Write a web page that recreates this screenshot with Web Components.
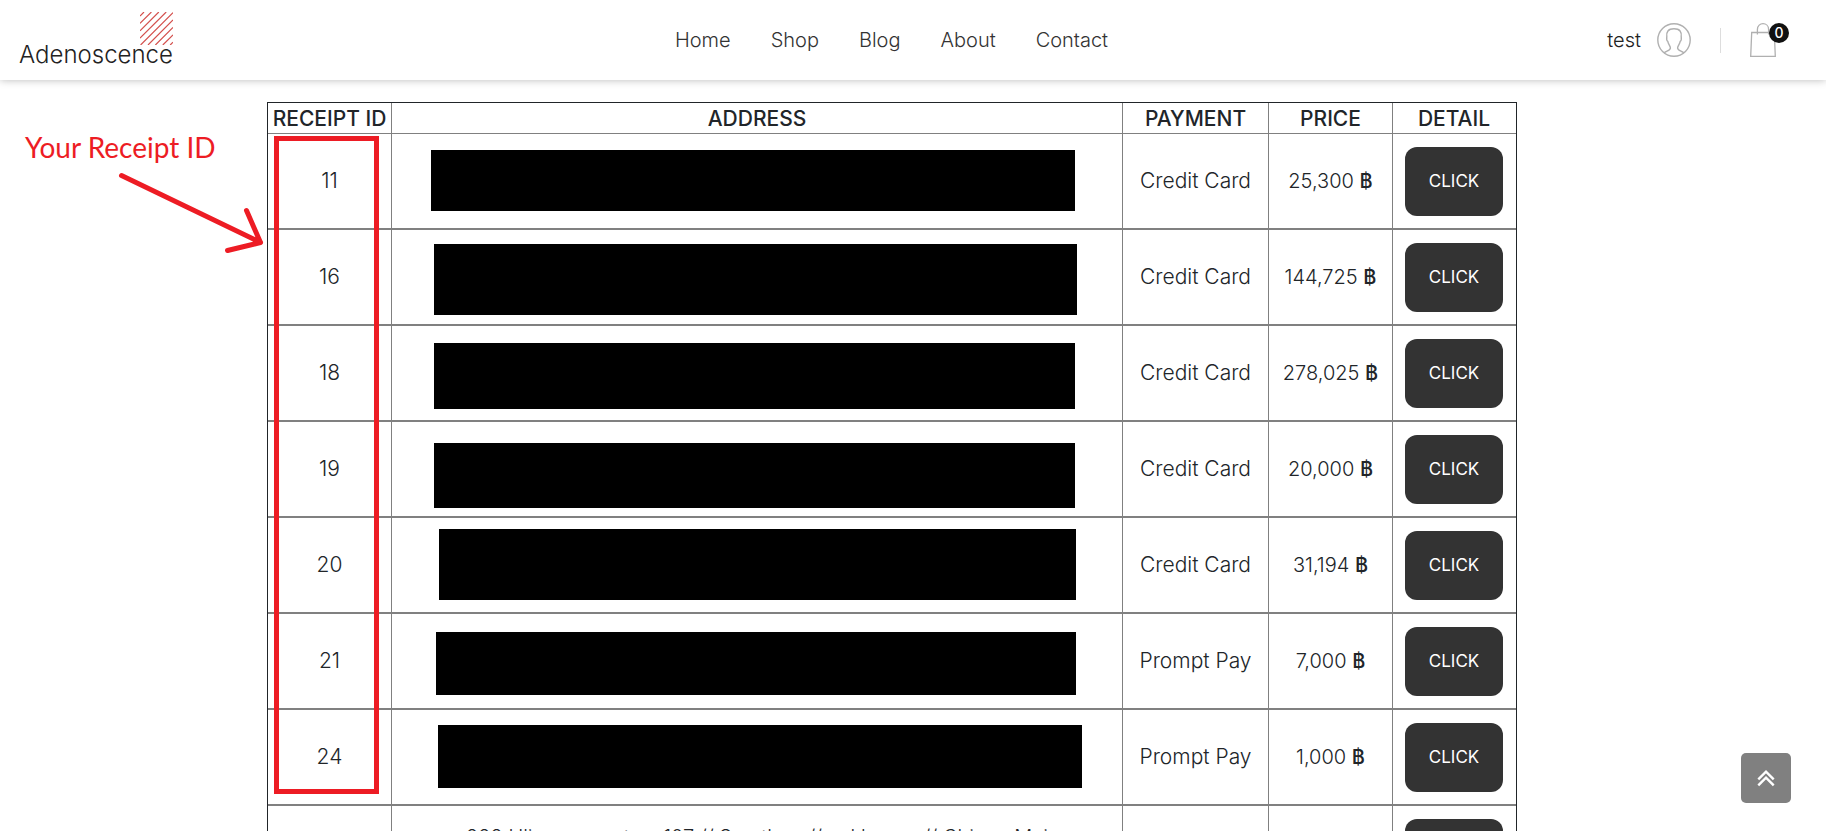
<!DOCTYPE html>
<html lang="en">
<head>
<meta charset="utf-8">
<title>Adenoscence</title>
<style>
  html { scrollbar-width: none; }
  body { margin: 0; background: #fff; color: #212529; font-family: Inter, "Noto Sans", sans-serif; font-weight: 300; }
  main { position: relative; padding: 22px 309px 40px 267px; }
</style>
</head>
<body>
<site-header>
  <site-logo slot="logo">Adenoscence</site-logo>
  <nav-link href="#home">Home</nav-link>
  <nav-link href="#shop">Shop</nav-link>
  <nav-link href="#blog">Blog</nav-link>
  <nav-link href="#about">About</nav-link>
  <nav-link href="#contact">Contact</nav-link>
  <user-link slot="tools">test</user-link>
  <cart-link slot="tools">0</cart-link>
</site-header>
<main>
  <receipt-table></receipt-table>
  <guide-layer>Your Receipt ID</guide-layer>
</main>
<scroll-top></scroll-top>

<script>
const define = (name, html, setup) => customElements.define(name, class extends HTMLElement {
  connectedCallback() {
    if (this.shadowRoot) return;
    const root = this.attachShadow({ mode: "open" });
    root.innerHTML = html;
    if (setup) setup(this, root);
  }
});

define("site-header", `
<style>
  :host { display: block; position: sticky; top: 0; z-index: 5; }
  header { display: grid; grid-template-columns: 1fr auto 1fr; align-items: center; box-sizing: border-box;
    height: 80px; padding: 0 37px 0 19px; background: #fff; box-shadow: 0 0 8px rgba(0,0,0,.28); }
  nav { display: flex; gap: 40px; margin-right: 25px; }
  .tools { display: flex; align-items: center; justify-content: flex-end; }
</style>
<header>
  <slot name="logo"></slot>
  <nav><slot></slot></nav>
  <div class="tools"><slot name="tools"></slot></div>
</header>`);

define("site-logo", `
<style>
  :host { display: block; padding-bottom: 4px; }
  a { display: inline-flex; flex-direction: column; align-items: flex-end; color: #222; text-decoration: none;
    font-size: 24px; line-height: 19px; }
  svg { display: block; }
</style>
<a href="#home">
  <svg width="33" height="33" viewBox="0 0 33 33" fill="none" stroke="#d4514e" stroke-width="1.2" aria-hidden="true">
    <path d="M4 0L0 4M11.4 0L0 11.4M18.8 0L0 18.8M26.2 0L0 26.2M33 .6L.6 33M33 8L8 33M33 15.4L15.4 33M33 22.8L22.8 33M33 30.2L30.2 33"/>
  </svg>
  <slot></slot>
</a>`);

define("nav-link", `
<style>
  :host { display: block; }
  a { color: #333; text-decoration: none; font-size: 20px; line-height: 24px; }
</style>
<a><slot></slot></a>`, (el, root) => { root.querySelector("a").href = el.getAttribute("href"); });

define("user-link", `
<style>
  :host { display: block; padding-right: 29px; }
  a { display: flex; align-items: center; gap: 16px; color: #222; text-decoration: none; font-size: 20px; line-height: 24px; }
</style>
<a href="#account"><slot></slot>
  <svg width="34" height="34" viewBox="0 0 34 34" fill="none" stroke="#b0b0b0" stroke-width="1.4" aria-hidden="true">
    <circle cx="17" cy="17" r="16.2"/>
    <path d="M7 30C9 28 13.4 27.6 13.4 25C13.4 23 11.2 21.4 10.8 18.4C9.2 17.4 9.6 15.4 9.8 13.6C9.2 9 11 5.8 17 5.8S24.8 9 24.2 13.6C24.4 15.4 24.8 17.4 23.2 18.4C22.8 21.4 20.6 23 20.6 25C20.6 27.6 25 28 27 30"/>
  </svg>
</a>`);

define("cart-link", `
<style>
  :host { display: flex; align-items: center; }
  .rule { width: 1px; height: 25px; background: #ddd; }
  a { position: relative; display: block; margin-left: 29px; padding-right: 13px; color: #fff; text-decoration: none; }
  svg { display: block; }
  .count { position: absolute; top: 0; right: 0; width: 20px; height: 20px; border-radius: 50%; background: #111;
    font-size: 14px; font-weight: 500; line-height: 20px; text-align: center; }
</style>
<span class="rule"></span>
<a href="#cart" aria-label="Cart">
  <svg width="26" height="34" viewBox="0 0 26 34" fill="none" stroke="#b0b0b0" stroke-width="1.3" aria-hidden="true">
    <path d="M1.7 9.5H24.3L25.3 33.3H.7ZM7.4 11.6V6.4C7.4 -1.2 18.6 -1.2 18.6 6.4V11.6"/>
  </svg>
  <span class="count"><slot></slot></span>
</a>`);

define("detail-button", `
<style>
  :host { display: inline-block; vertical-align: top; }
  button { display: block; width: 98px; height: 69px; padding: 0; border: 0; border-radius: 12px; background: #333; color: #fff;
    font: inherit; font-size: 17px; font-weight: 400; cursor: pointer; }
</style>
<button type="button"><slot></slot></button>`);

const receipts = [
  ["11", "", "Credit Card", "25,300"],
  ["16", "", "Credit Card", "144,725"],
  ["18", "", "Credit Card", "278,025"],
  ["19", "", "Credit Card", "20,000"],
  ["20", "", "Credit Card", "31,194"],
  ["21", "", "Prompt Pay", "7,000"],
  ["24", "", "Prompt Pay", "1,000"],
  ["", "222 Ulica nearest so 107 // Sarathon // nakhonsa // Chiang Mai", "", ""]
];

define("receipt-table", `
<style>
  :host { display: block; }
  table { width: 100%; table-layout: fixed; border: 1px solid #212529; border-collapse: separate; border-spacing: 0; text-align: center; }
  .id, .price { width: 123px; }
  .payment { width: 145px; }
  .detail { width: 122px; }
  th, td { padding: 0; border-right: 1px solid #808080; }
  th:last-child, td:last-child { padding-right: 1px; border-right: 0; }
  th { height: 28px; padding-top: 2px; border-bottom: 1px solid #808080; font-size: 21px; font-weight: 500; line-height: 28px; white-space: nowrap; }
  td { height: 94px; border-bottom: 2px solid #808080; font-size: 21px; line-height: 30px; }
  td.money { font-size: 20px; }
  td.address { padding: 17px 60px 0; height: 77px; vertical-align: top; font-size: 20px; line-height: 28px; white-space: nowrap; }
  b { font-weight: 500; }
</style>
<table>
  <thead><tr><th class="id" scope="col">RECEIPT ID</th><th scope="col">ADDRESS</th><th class="payment" scope="col">PAYMENT</th><th class="price" scope="col">PRICE</th><th class="detail" scope="col">DETAIL</th></tr></thead>
  <tbody></tbody>
</table>`, (el, root) => {
  root.querySelector("tbody").innerHTML = receipts.map(([id, address, payment, price]) =>
    `<tr><td>${id}</td><td class="address">${address}</td><td>${payment}</td><td class="money">${price ? price + " <b>฿</b>" : ""}</td><td><detail-button>CLICK</detail-button></td></tr>`).join("");
});

/* Hand-drawn notes laid over the table: redactions, a frame and an arrow. */
define("guide-layer", `
<style>
  :host { position: absolute; top: 0; left: 0; pointer-events: none; color: #ed1c24; }
  svg { display: block; }
  p { position: absolute; left: 25px; top: 51px; margin: 0; font: 400 28px/32px Lato, "Open Sans", sans-serif; white-space: nowrap; }
</style>
<svg width="1100" height="720" viewBox="0 80 1100 720" aria-hidden="true">
  <path d="M431 150H1075V211H431ZM434 244H1077V315H434ZM434 343H1075V409H434ZM434 443H1075V508H434ZM439 529H1076V600H439ZM436 632H1076V695H436ZM438 725H1082V788H438Z"/>
  <g fill="none" stroke="#ed1c24" stroke-width="5">
    <rect x="276.500" y="138.500" width="100" height="653"/>
    <path stroke-linecap="round" stroke-linejoin="round" d="M121.500 175.500L260.500 242.500M246.500 210.500L260.500 242.500L227.500 250.500"/>
  </g>
</svg>
<p><slot></slot></p>`);

define("scroll-top", `
<style>
  :host { position: fixed; right: 35px; bottom: 28px; z-index: 4; }
  button { display: grid; place-items: center; width: 50px; height: 50px; padding: 0; border: 0; border-radius: 5px; background: #808080; cursor: pointer; }
</style>
<button type="button" aria-label="Back to top">
  <svg width="18" height="18" viewBox="0 0 18 18" fill="none" stroke="#fff" stroke-width="2.4" aria-hidden="true">
    <path d="M1.300 10.300L9 2.600L16.700 10.300M1.300 16.300L9 8.600L16.700 16.300"/>
  </svg>
</button>`, (el, root) => {
  root.querySelector("button").addEventListener("click", () => scrollTo({ top: 0, behavior: "smooth" }));
});
</script>
</body>
</html>
